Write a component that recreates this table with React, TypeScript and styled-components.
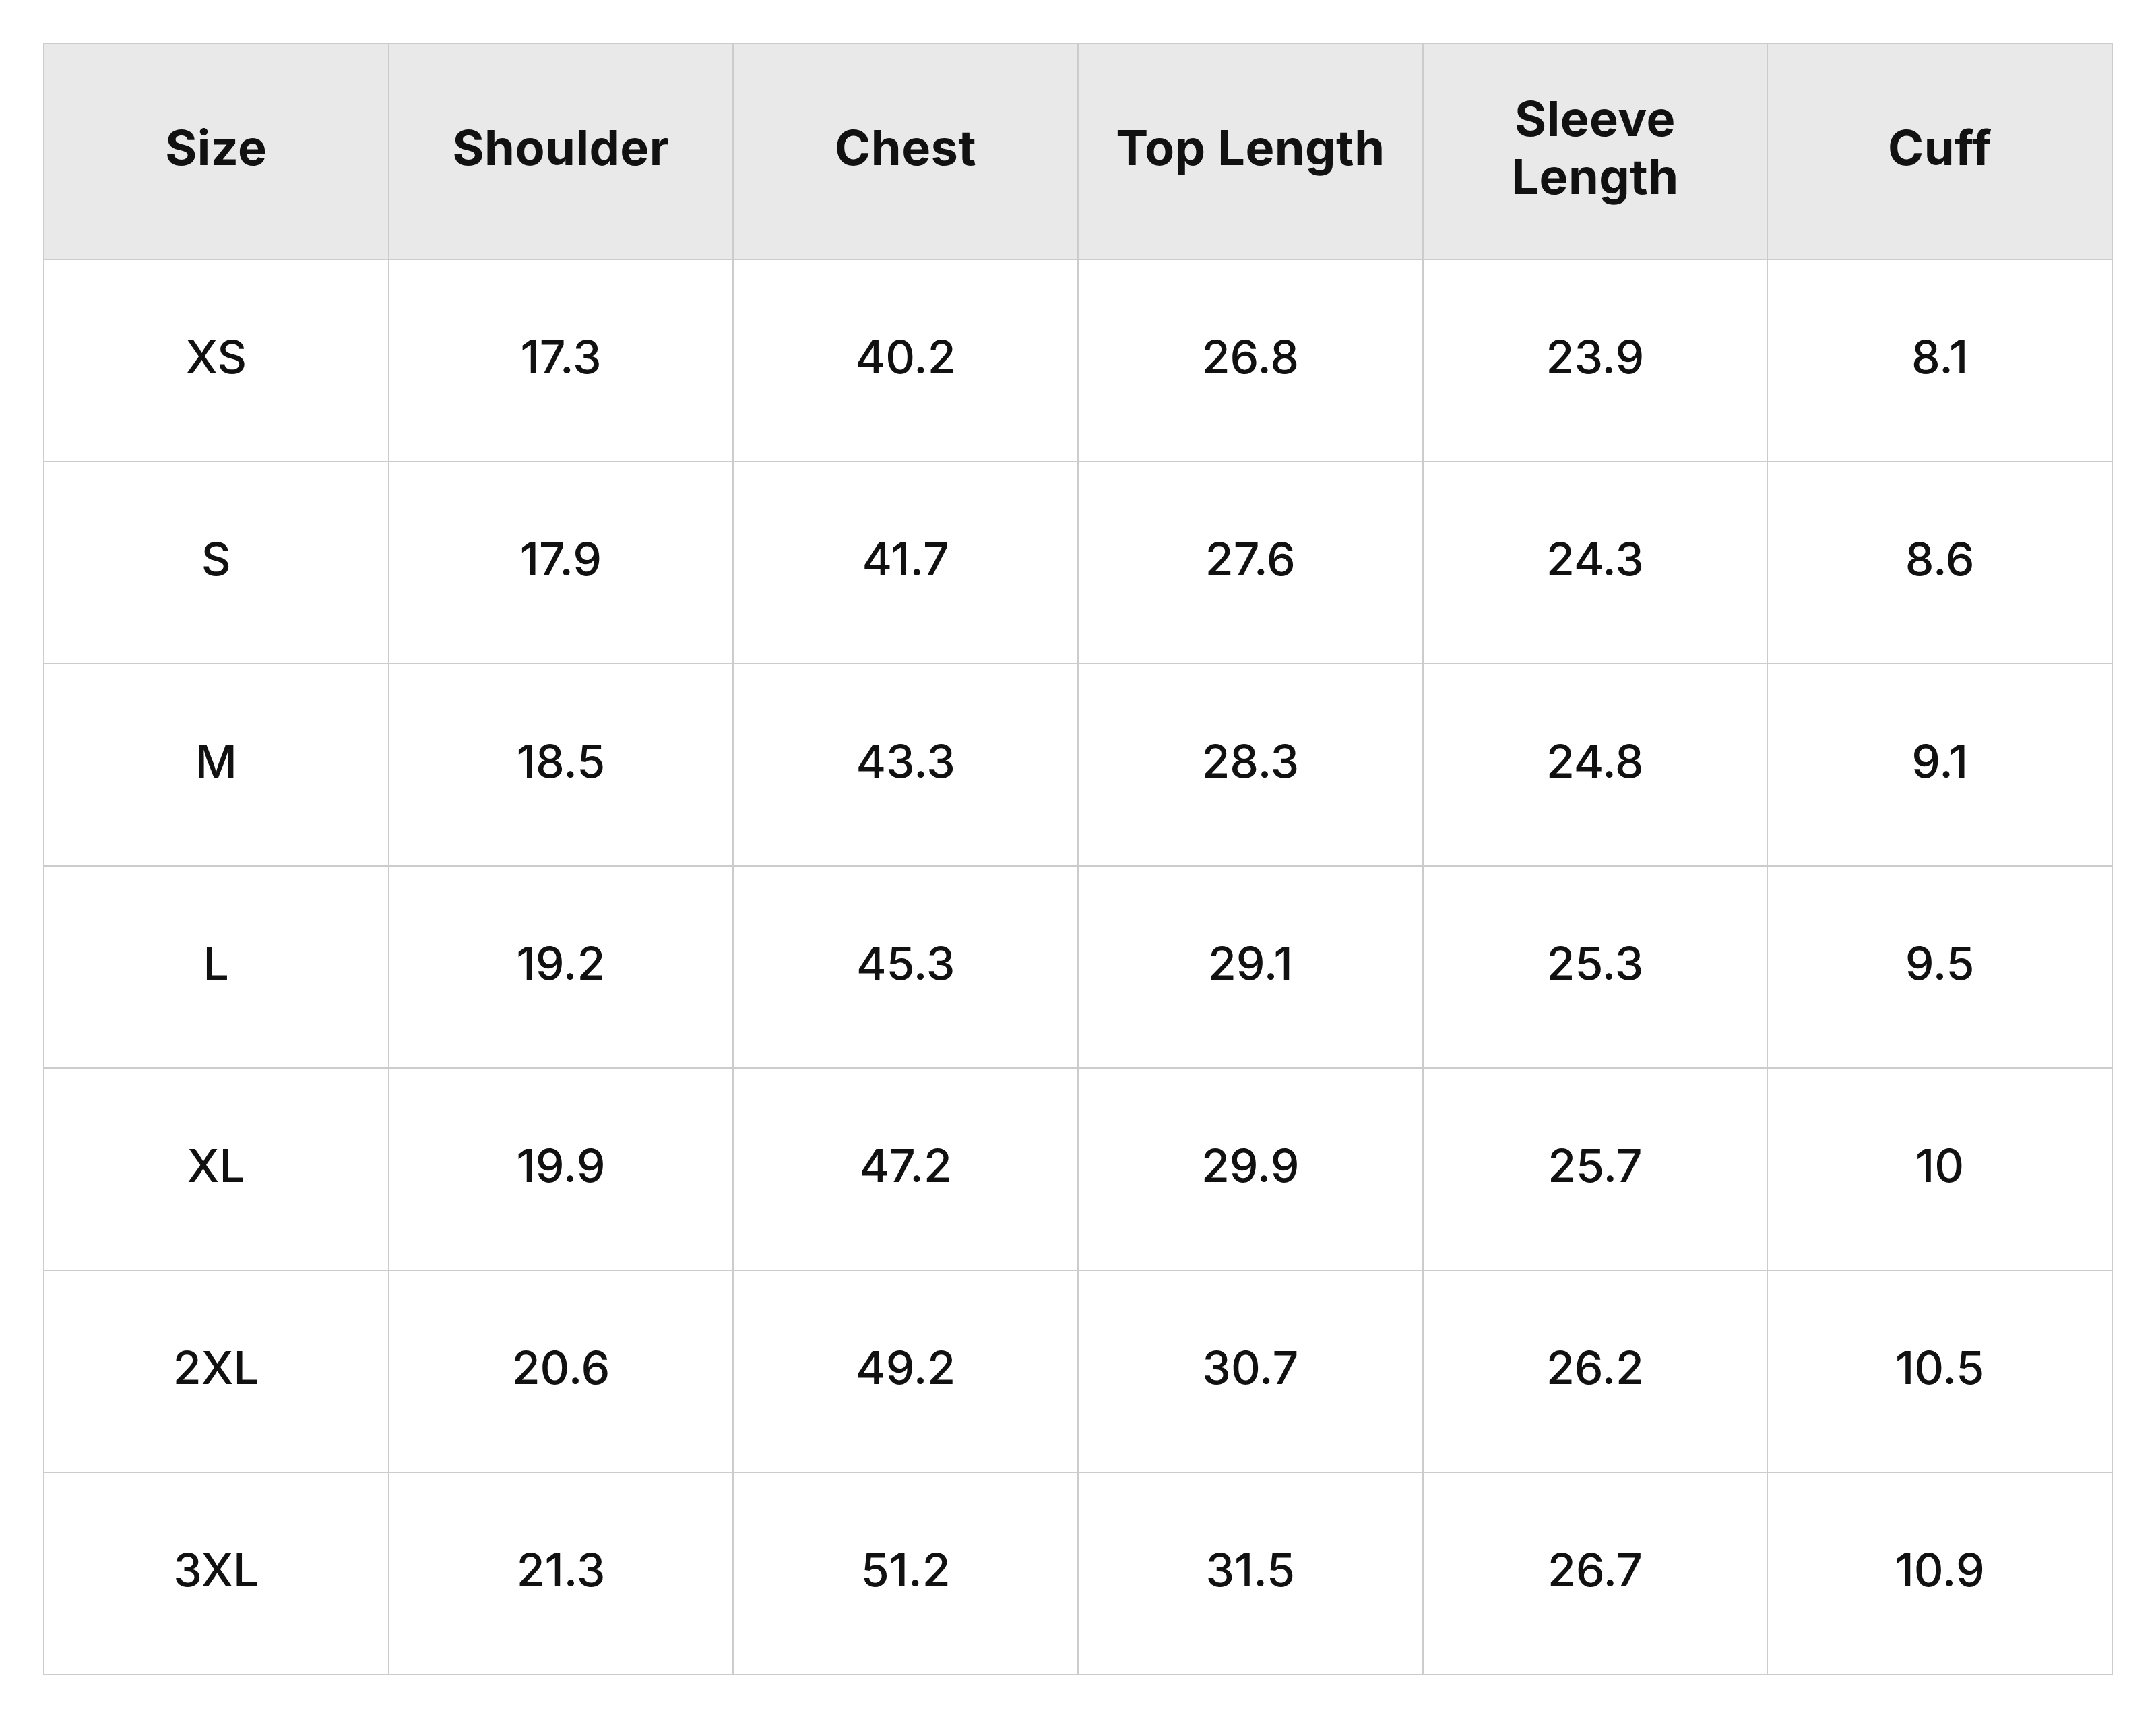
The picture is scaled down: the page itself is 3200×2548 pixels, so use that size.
import React from "react";
import styled, { createGlobalStyle } from "styled-components";

const Global = createGlobalStyle`
  html, body { margin: 0; padding: 0; background: #ffffff; }
  body { font-family: Inter, "Noto Sans", "Liberation Sans", sans-serif; color: #111111; }
`;

const Page = styled.div`
  padding: 64px;
  width: 3072px;
`;

const Table = styled.table`
  width: 3072px;
  table-layout: fixed;
  border-collapse: collapse;
  border: 2px solid #cccccc;
`;

const HeadRow = styled.tr`
  height: 320px;
  background: #e9e9e9;
`;

const BodyRow = styled.tr`
  height: 300px;
  background: #ffffff;
`;

const Th = styled.th`
  border: 2px solid #cccccc;
  padding: 0 52px 12px;
  font-size: 72px;
  font-weight: 700;
  line-height: 86px;
  text-align: center;
  vertical-align: middle;
  color: #111111;
  letter-spacing: 0.5px;
`;

const Td = styled.td`
  border: 2px solid #cccccc;
  padding: 0 40px 12px;
  font-size: 68px;
  font-weight: 500;
  text-align: center;
  vertical-align: middle;
  color: #111111;
`;

const headers = ["Size", "Shoulder", "Chest", "Top Length", "Sleeve Length", "Cuff"];

const rows: string[][] = [
  ["XS", "17.3", "40.2", "26.8", "23.9", "8.1"],
  ["S", "17.9", "41.7", "27.6", "24.3", "8.6"],
  ["M", "18.5", "43.3", "28.3", "24.8", "9.1"],
  ["L", "19.2", "45.3", "29.1", "25.3", "9.5"],
  ["XL", "19.9", "47.2", "29.9", "25.7", "10"],
  ["2XL", "20.6", "49.2", "30.7", "26.2", "10.5"],
  ["3XL", "21.3", "51.2", "31.5", "26.7", "10.9"],
];

export default function App() {
  return (
    <Page>
      <Global />
      <Table>
        <thead>
          <HeadRow>
            {headers.map((h) => (
              <Th key={h}>{h}</Th>
            ))}
          </HeadRow>
        </thead>
        <tbody>
          {rows.map((r) => (
            <BodyRow key={r[0]}>
              {r.map((c, i) => (
                <Td key={i}>{c}</Td>
              ))}
            </BodyRow>
          ))}
        </tbody>
      </Table>
    </Page>
  );
}
